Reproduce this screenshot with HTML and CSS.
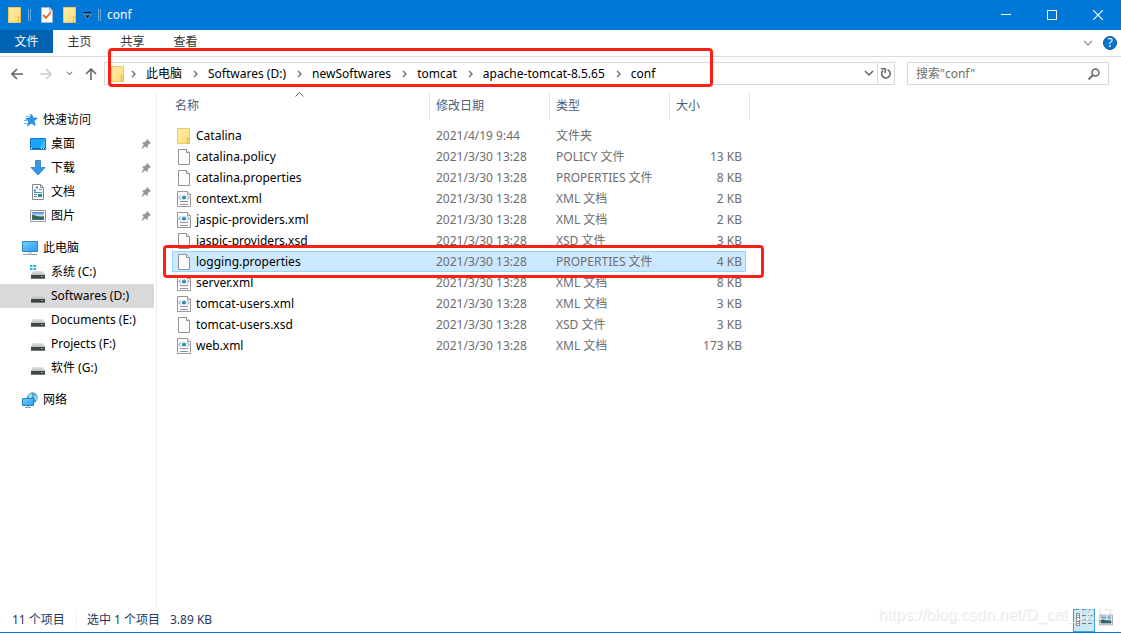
FILE: index.html
```html
<!DOCTYPE html>
<html lang="zh-CN">
<head>
<meta charset="utf-8">
<title>conf</title>
<link rel="stylesheet" href="styles.css">
</head>
<body>
<svg class="sprite" aria-hidden="true">
  <defs>
    <linearGradient id="gold" x2="1" y2="1"><stop offset="0" stop-color="#ffeba5"/><stop offset="1" stop-color="#ffdc7b"/></linearGradient>
    <linearGradient id="screen" x2="1" y2="1"><stop offset="0" stop-color="#79cdfb"/><stop offset="1" stop-color="#209cf2"/></linearGradient>
    <linearGradient id="sky" x2="0" y2="1"><stop offset="0" stop-color="#3f86d8"/><stop offset=".5" stop-color="#d5ebf6"/><stop offset=".6" stop-color="#466e59"/><stop offset="1" stop-color="#366faf"/></linearGradient>
    <linearGradient id="metal" x2="0" y2="1"><stop offset="0" stop-color="#e2e2e2"/><stop offset="1" stop-color="#b8babc"/></linearGradient>
    <symbol id="folder" viewBox="0 0 16 18"><path d="M1.500 1.500h12v15h-12z" fill="url(#gold)" stroke="#efca60"/><path d="M11.500 16.500v-5.500h2v5.500z" fill="#ffe391" stroke="#e5b93f"/></symbol>
    <symbol id="file" viewBox="0 0 16 18"><path d="M2.500 1.500h8l3 3v12h-11z" fill="#fcfcfc" stroke="#929292"/><path d="M10.500 1.500v3h3" fill="#eee" stroke="#929292"/></symbol>
    <symbol id="xml" viewBox="0 0 16 18"><path d="M1.500 1.500h10l3 3v12h-13z" fill="#fbfbfd" stroke="#999"/><path d="M11.500 1.500v3h3" fill="#eee" stroke="#999"/><path d="M4.700 5.500 3 7.500l1.700 2M11.300 5.500l1.700 2-1.700 2" fill="none" stroke="#76777f" stroke-width=".9"/><circle cx="8" cy="7.500" r="2.100" fill="#168ac0"/><path d="M7 6h2l-1 2z" fill="#69c581"/><path d="M4 11.500h8M4 14.500h8" stroke="#9291a6"/></symbol>
    <symbol id="star" viewBox="0 0 16 16"><path d="m9.500 2 1.600 4 4.200.1-3.200 2.800 1.100 4.700-3.700-2.300-4.200 2.600 1.500-4.600-3.200-2.800 4.100-.4z" fill="#2397e5" stroke="#1778bd" stroke-width=".6"/><path d="M4 4.500h3M2 8.500h3M2 11.500h3M7 2.500h1" stroke="#5bb8f0"/></symbol>
    <symbol id="desktop" viewBox="0 0 16 16"><path d="M.5 2.500h15v11H.5z" fill="#1ca3fb" stroke="#147bca"/><path d="M9 12 15 3v9z" fill="#44b7ff"/><path d="M1 12.500h14" stroke="#176098"/><path d="M1 12.500h1M11 12.500h1M13 12.500h1" stroke="white"/></symbol>
    <symbol id="down" viewBox="0 0 16 16"><path d="M5.500.5h5v7h4.500L8 15 1 7.500h4.500z" fill="#3996e7" stroke="#2877bd" stroke-width=".8"/></symbol>
    <symbol id="doc" viewBox="0 0 16 16"><path d="M2.500.5h8l3 3v12h-11z" fill="#fdfdfd" stroke="#888"/><path d="M10.500.5v3h3" fill="none" stroke="#888"/><path d="M4 6.500h2M6 3.500h2" stroke="#278bce" stroke-width="2"/><path d="M9 5.500h3M4 8.500h8M4 10.500h3M4 12.500h3" stroke="#5191b9"/><path d="M8 10h4v3H8z" fill="#2b8c85"/></symbol>
    <symbol id="picture" viewBox="0 0 16 16"><path d="M.5 2.500h15v11H.5z" fill="#fff" stroke="#999"/><path d="M2 4h12v8H2z" fill="url(#sky)"/><path d="M2 7c4 0 6 2 12 3v1H2z" fill="#376653"/></symbol>
    <symbol id="computer" viewBox="0 0 16 16"><path d="M.5 1.500h15v10H.5z" fill="url(#screen)" stroke="#3584b7"/><path d="M6 12h4v2H6z" fill="#d3dee5"/><path d="M1 14.500h14" stroke="#8ba2b2"/></symbol>
    <symbol id="drive" viewBox="0 0 16 16"><path d="M3 7h10l2 4H1z" fill="url(#metal)"/><path d="M1 11h14v4H1z" fill="#3f4444"/><path d="M1 14.500h14" stroke="#747878"/><path d="M11 12.500h2" stroke="#29e64a"/></symbol>
    <symbol id="windrive" viewBox="0 0 16 16"><use href="#drive"/><path d="M0 1h2.500v2H0zM3.500 1H6v2H3.500zM0 4h2.500v2H0zM3.500 4H6v2H3.500z" fill="#12b6ed"/></symbol>
    <symbol id="network" viewBox="0 0 16 16"><circle cx="10.300" cy="5.700" r="5.400" fill="#4a9cc5"/><path d="M7 2c3-1.500 4 1 3 3S7 6 6 5zM12 2l3 3-.5 4-2-2z" fill="#9fd6e8"/><path d="M.5 6.500h11v7H.5z" fill="url(#screen)" stroke="#2583bd"/><path d="M3 15.500h6M6 14v1" stroke="#829cad"/></symbol>
    <symbol id="pin" viewBox="0 0 12 12"><path d="m7 1 4 4-1.300.5-1.900 2L7.500 10 5.300 8.400 1 11.500 3.700 6.800 2 4.600l2.500-.3 2-1.800z" fill="#8e979e"/></symbol>
    <symbol id="chev" viewBox="0 0 6 8"><path d="m1 1 3 3-3 3" fill="none" stroke="#6d6d6d" stroke-width="1.400"/></symbol>
    <symbol id="chevdown" viewBox="0 0 10 7"><path d="m1 1 4 4 4-4" fill="none" stroke="currentColor" stroke-width="1.500"/></symbol>
  </defs>
</svg>

<div class="window">
  <header class="titlebar">
    <svg class="folder-icon"><use href="#folder"/></svg>
    <span class="bar bar-first"></span>
    <button class="quick" aria-label="属性"><svg width="14" height="18" viewBox="0 0 14 18"><path d="M1.500 1.500h8l3 3v12h-11z" fill="#fff" stroke="#aab4bd"/><path d="M9.500 1.500v3h3" fill="#ddd" stroke="#aab4bd"/><path d="m3 9 3 3 5-6" fill="none" stroke="#e4602b" stroke-width="1.800"/></svg></button>
    <button class="quick quick-folder" aria-label="新建文件夹"><svg class="folder-icon"><use href="#folder"/></svg></button>
    <button class="quick" aria-label="自定义快速访问工具栏"><svg width="9" height="8" viewBox="0 0 9 8"><path d="M1 1.500h7" stroke="#111"/><path d="M1 4h7L4.500 7.500z" fill="#111" stroke="#cfe5f7" stroke-width=".5"/></svg></button>
    <span class="bar bar-last"></span>
    <h1 class="title">conf</h1>
    <button class="winbtn" aria-label="最小化"><svg width="10" height="10"><path d="M0 4.500h10" stroke="#fff"/></svg></button>
    <button class="winbtn" aria-label="最大化"><svg width="10" height="10"><path d="M.5.5h9v9h-9z" stroke="#fff" fill="none"/></svg></button>
    <button class="winbtn" aria-label="关闭"><svg width="10" height="10"><path d="m0 0 10 10M10 0 0 10" stroke="#fff" stroke-width="1.200"/></svg></button>
  </header>

  <div class="ribbon">
    <button class="tab tab-file">文件</button>
    <button class="tab">主页</button>
    <button class="tab">共享</button>
    <button class="tab">查看</button>
    <button class="expand" aria-label="展开功能区"><svg width="10" height="7"><use href="#chevdown"/></svg></button>
    <button class="help" aria-label="帮助">?</button>
  </div>

  <div class="navrow">
    <div class="history">
      <button aria-label="后退"><svg width="12" height="12" viewBox="0 0 12 12"><path d="M12 6H1M6 1 1 6l5 5" fill="none" stroke="#666" stroke-width="1.600"/></svg></button>
      <button aria-label="前进"><svg width="12" height="12" viewBox="0 0 12 12"><path d="M0 6h11M6 1l5 5-5 5" fill="none" stroke="#ccc" stroke-width="1.600"/></svg></button>
      <button class="recent" aria-label="最近浏览的位置"><svg width="7" height="5" viewBox="0 0 10 7"><use href="#chevdown"/></svg></button>
      <button aria-label="上移"><svg width="12" height="12" viewBox="0 0 12 12"><path d="M6 12V1M1 6l5-5 5 5" fill="none" stroke="#666" stroke-width="1.600"/></svg></button>
    </div>
    <div class="address">
      <svg class="folder-icon"><use href="#folder"/></svg>
      <nav class="crumbs" aria-label="地址">
        <svg><use href="#chev"/></svg><a href="#pc">此电脑</a>
        <svg><use href="#chev"/></svg><a href="#d">Softwares (D:)</a>
        <svg><use href="#chev"/></svg><a href="#new">newSoftwares</a>
        <svg><use href="#chev"/></svg><a href="#tomcat">tomcat</a>
        <svg><use href="#chev"/></svg><a href="#apache">apache-tomcat-8.5.65</a>
        <svg><use href="#chev"/></svg><a href="#conf">conf</a>
      </nav>
      <button class="drop" aria-label="以前的位置"><svg width="10" height="7"><use href="#chevdown"/></svg></button>
      <button class="refresh" aria-label="刷新"><svg width="12" height="13" viewBox="0 0 12 13"><path d="M7.500 2.700A4.300 4.300 0 1 1 3 3.500" fill="none" stroke="#666" stroke-width="1.600"/><path d="M1 1.700h4.200V6" fill="none" stroke="#666" stroke-width="1.500"/></svg></button>
    </div>
    <label class="search">
      <input type="text" aria-label="搜索conf" placeholder='搜索"conf"'>
      <svg width="12" height="12" viewBox="0 0 12 12"><circle cx="7.500" cy="4.500" r="3.500" fill="none" stroke="#666" stroke-width="1.500"/><path d="m5 7-4.500 4.500" stroke="#666" stroke-width="1.900"/></svg>
    </label>
    <div class="mark mark-address"></div>
  </div>

  <main class="content">
    <nav class="sidebar" aria-label="导航窗格">
      <a class="root" href="#quick"><svg><use href="#star"/></svg>快速访问</a>
      <a href="#desk"><svg><use href="#desktop"/></svg>桌面<svg class="pin"><use href="#pin"/></svg></a>
      <a href="#downloads"><svg><use href="#down"/></svg>下载<svg class="pin"><use href="#pin"/></svg></a>
      <a href="#docs"><svg><use href="#doc"/></svg>文档<svg class="pin"><use href="#pin"/></svg></a>
      <a href="#pics"><svg><use href="#picture"/></svg>图片<svg class="pin"><use href="#pin"/></svg></a>
      <a class="root spaced" href="#pc"><svg><use href="#computer"/></svg>此电脑</a>
      <a href="#c"><svg><use href="#windrive"/></svg>系统 (C:)</a>
      <a class="current" href="#d"><svg><use href="#drive"/></svg>Softwares (D:)</a>
      <a href="#e"><svg><use href="#drive"/></svg>Documents (E:)</a>
      <a href="#f"><svg><use href="#drive"/></svg>Projects (F:)</a>
      <a href="#g"><svg><use href="#drive"/></svg>软件 (G:)</a>
      <a class="root spaced" href="#net"><svg><use href="#network"/></svg>网络</a>
    </nav>
    <div class="files">
      <table>
        <colgroup><col class="c-name"><col class="c-mid"><col class="c-mid"><col class="c-size"><col class="c-end"></colgroup>
        <thead><tr><th>名称<svg class="sort" width="9" height="5"><path d="m.5 4.500 4-4 4 4" fill="none" stroke="#666"/></svg></th><th>修改日期</th><th>类型</th><th colspan="2">大小</th></tr></thead>
        <tbody>
          <tr><td><svg><use href="#folder"/></svg>Catalina</td><td>2021/4/19 9:44</td><td>文件夹</td><td></td></tr>
          <tr><td><svg><use href="#file"/></svg>catalina.policy</td><td>2021/3/30 13:28</td><td>POLICY 文件</td><td>13 KB</td></tr>
          <tr><td><svg><use href="#file"/></svg>catalina.properties</td><td>2021/3/30 13:28</td><td>PROPERTIES 文件</td><td>8 KB</td></tr>
          <tr><td><svg><use href="#xml"/></svg>context.xml</td><td>2021/3/30 13:28</td><td>XML 文档</td><td>2 KB</td></tr>
          <tr><td><svg><use href="#xml"/></svg>jaspic-providers.xml</td><td>2021/3/30 13:28</td><td>XML 文档</td><td>2 KB</td></tr>
          <tr><td><svg><use href="#file"/></svg>jaspic-providers.xsd</td><td>2021/3/30 13:28</td><td>XSD 文件</td><td>3 KB</td></tr>
          <tr class="selected"><td><svg><use href="#file"/></svg>logging.properties</td><td>2021/3/30 13:28</td><td>PROPERTIES 文件</td><td>4 KB</td></tr>
          <tr><td><svg><use href="#xml"/></svg>server.xml</td><td>2021/3/30 13:28</td><td>XML 文档</td><td>8 KB</td></tr>
          <tr><td><svg><use href="#xml"/></svg>tomcat-users.xml</td><td>2021/3/30 13:28</td><td>XML 文档</td><td>3 KB</td></tr>
          <tr><td><svg><use href="#file"/></svg>tomcat-users.xsd</td><td>2021/3/30 13:28</td><td>XSD 文件</td><td>3 KB</td></tr>
          <tr><td><svg><use href="#xml"/></svg>web.xml</td><td>2021/3/30 13:28</td><td>XML 文档</td><td>173 KB</td></tr>
        </tbody>
      </table>
      <div class="mark mark-file"></div>
    </div>
  </main>

  <footer class="status">
    <span class="count">11 个项目</span>
    <span class="picked">选中 1 个项目</span>
    <span class="bytes">3.89 KB</span>
    <button class="view view-on" aria-label="详细信息"><svg width="16" height="14" viewBox="0 0 16 14"><path d="M.5.500h3v12h-3zM.5 4.500h3M.5 8.500h3" fill="#fff" stroke="#888"/><path d="M1.500 2.500h1" stroke="#1679c6"/><path d="M1.500 10.500h1" stroke="#d33"/><path d="M6 2.500h4M12 2.500h4M6 6.500h4M12 6.500h4M6 10.500h4M12 10.500h4" stroke="#777"/></svg></button>
    <button class="view" aria-label="大图标"><svg width="14" height="14" viewBox="0 0 16 16"><use href="#picture"/></svg></button>
    <span class="watermark">https://blog.csdn.net/D_cat_1217</span>
  </footer>
</div>
</body>
</html>
```
FILE: styles.css
```css
* { box-sizing: border-box; }

body {
  margin: 0;
  background: #fff;
  color: #000;
  font: 12px/20px "Noto Sans", "Noto Sans CJK SC", sans-serif;
}

button {
  display: flex;
  align-items: center;
  justify-content: center;
  flex: none;
  padding: 0;
  border: 0;
  background: none;
  color: inherit;
  font: inherit;
}

a { color: inherit; text-decoration: none; }
svg { flex: none; }
.sprite { position: absolute; width: 0; height: 0; }
.folder-icon { width: 16px; height: 18px; }

.window {
  display: flex;
  flex-direction: column;
  min-height: 100vh;
  border-bottom: 1px solid #0078d7;
}

/* Title bar */
.titlebar {
  display: flex;
  align-items: center;
  height: 30px;
  padding-left: 7px;
  background: #0078d7;
  color: #fff;
}
.bar { width: 3px; height: 12px; border: solid #65a9df; border-width: 0 1px; }
.bar-first { margin: 0 9px 0 5px; }
.bar-last { margin: 0 6px; }
.quick-folder { margin: 0 5px 0 8px; }
.title { flex: 1; margin: 0; font-size: 12px; font-weight: 400; }
.winbtn { width: 46px; height: 30px; }

/* Ribbon tabs */
.ribbon {
  display: flex;
  height: 27px;
  padding-right: 4px;
  border-bottom: 1px solid #dadbdc;
}
.tab { width: 53px; height: 23px; color: #333; }
.tab-file { background: #0063b1; color: #fff; }
.expand { width: 10px; margin: 0 10px 0 auto; color: #999; }
.help {
  width: 14px;
  height: 14px;
  margin-top: 6px;
  border: 1px solid #0a5c9f;
  border-radius: 50%;
  background: #0877d1;
  color: #fff;
  line-height: 12px;
}

/* Address row */
.navrow {
  position: relative;
  display: flex;
  align-items: center;
  height: 35px;
  padding: 0 12px 2px 0;
}
.history { display: flex; align-items: center; width: 104px; padding-left: 11px; gap: 17px; }
.recent { width: 7px; margin: 0 -5px 0 -3px; color: #777; }
.address {
  display: flex;
  align-items: center;
  flex: 1;
  height: 23px;
  padding-left: 5px;
  border: 1px solid #d9d9d9;
}
.crumbs { display: flex; align-items: center; flex: 1; white-space: nowrap; }
.crumbs svg { width: 6px; height: 8px; margin: 0 9px 0 11px; }
.crumbs svg:first-child { margin-left: 5px; }
.drop { width: 17px; color: #666; }
.refresh { width: 17px; height: 21px; border-left: 1px solid #d9d9d9; }
.search {
  display: flex;
  align-items: center;
  width: 202px;
  height: 23px;
  margin-left: 12px;
  padding: 0 8px;
  border: 1px solid #d9d9d9;
}
.search input { flex: 1; min-width: 0; padding: 0; border: 0; outline: 0; font: inherit; }
.search input::placeholder { color: #6d6d6d; }

.mark {
  position: absolute;
  border: 3px solid #ff2015;
  border-radius: 4px;
  pointer-events: none;
}
.mark-address { left: 108px; top: -9px; width: 605px; height: 39px; }

/* Content */
.content { display: flex; flex: 1; }
.sidebar { width: 157px; padding: 16px 2px 0 0; border-right: 1px solid #f0f0f0; }
.sidebar a {
  display: flex;
  align-items: center;
  gap: 5px;
  height: 24px;
  padding-left: 30px;
  padding-right: 2px;
  white-space: nowrap;
}
.sidebar a svg { width: 16px; height: 16px; }
.sidebar a.root { padding-left: 22px; }
.sidebar a.spaced { margin-top: 8px; }
.sidebar a.current { background: #d9d9d9; }
.sidebar a .pin { width: 12px; height: 12px; margin-left: auto; }

.files { position: relative; flex: 1; padding-left: 15px; }
table { width: 578px; table-layout: fixed; border-collapse: separate; border-spacing: 0; }
.c-name { width: 258px; }
.c-mid { width: 120px; }
.c-size { width: 76px; }
.c-end { width: 4px; }
th {
  position: relative;
  height: 27px;
  padding: 0 6px;
  border-right: 1px solid #e5e5e5;
  color: #4c607a;
  font-weight: 400;
  text-align: left;
}
th:first-child { padding-left: 3px; }
.sort { position: absolute; left: 123px; top: 0; }
thead::after { content: ""; display: block; height: 6px; }
td { height: 21px; padding: 0 6px; color: #6d6d6d; white-space: nowrap; }
td:first-child { padding-left: 4px; color: #000; }
td:last-child { padding-right: 4px; text-align: right; }
td svg { width: 16px; height: 18px; margin-right: 4px; vertical-align: middle; }
.selected td { background: #cce8ff; box-shadow: inset 0 1px #99d1ff, inset 0 -1px #99d1ff; }
.selected td:first-child { box-shadow: inset 1px 1px #99d1ff, inset 0 -1px #99d1ff; }
.selected td:last-child { box-shadow: inset -1px -1px #99d1ff, inset 0 1px #99d1ff; }
.mark-file { left: 6px; top: 153px; width: 601px; height: 33px; }

/* Status bar */
.status {
  position: relative;
  display: flex;
  align-items: center;
  height: 24px;
  padding: 0 4px 0 12px;
  color: #1e395b;
}
.count { width: 64px; }
.picked { width: 94px; padding-left: 10px; border-left: 1px solid #eee; line-height: 12px; }
.bytes { flex: 1; }
.view { width: 22px; height: 23px; }
.view-on { border: 1px solid #3da5dc; background: #cce8f5; }
.watermark {
  position: absolute;
  right: 9px;
  bottom: 7px;
  color: rgba(255, 255, 255, 0.7);
  font: 16px/20px "Liberation Sans", Arial, sans-serif;
  text-shadow: 1px 1px 1px rgba(0, 0, 0, 0.12);
  pointer-events: none;
}
```
